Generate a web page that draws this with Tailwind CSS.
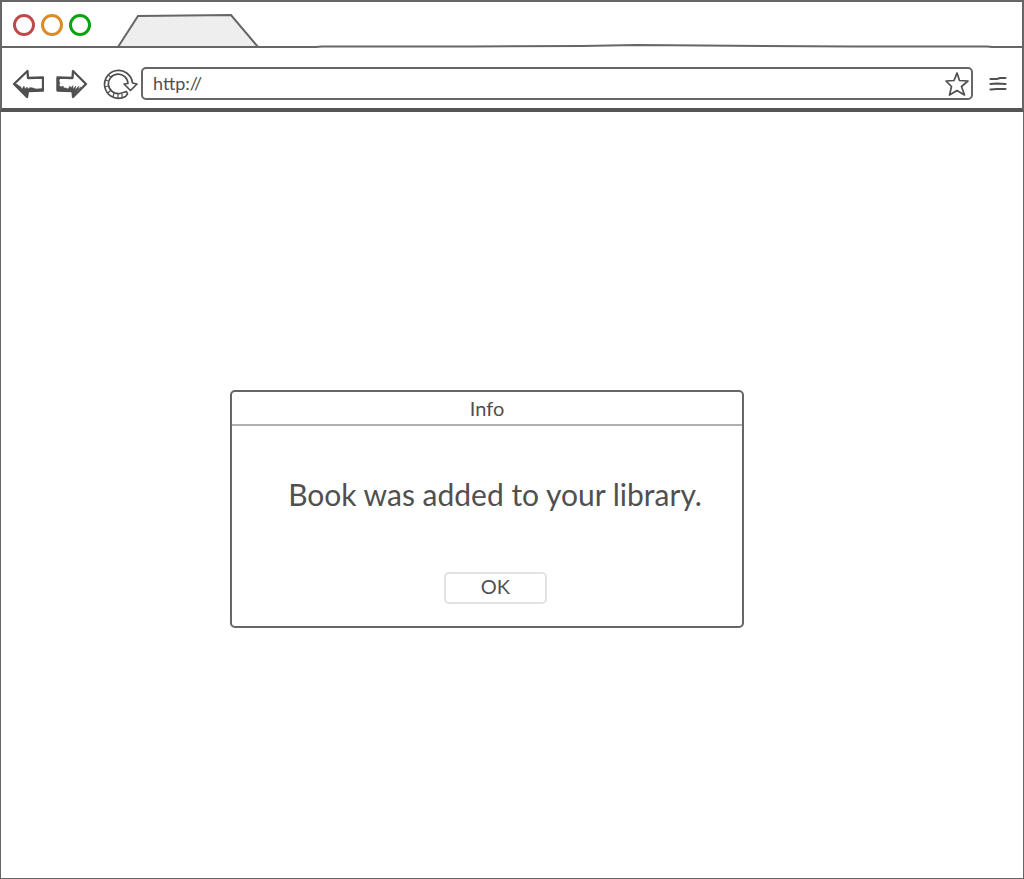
<!DOCTYPE html>
<html lang="en">
<head>
<meta charset="utf-8">
<meta name="viewport" content="width=device-width, initial-scale=1">
<title>Info</title>
<script src="https://cdn.jsdelivr.net/npm/@tailwindcss/browser@4"></script>
</head>
<body class="flex min-h-screen flex-col bg-white font-['Lato',sans-serif] text-[#505050]">
<header class="border-x-2 border-t-2 border-b-4 border-[#666] border-b-[#555]">
  <div class="flex h-[42px] items-start">
    <div class="flex gap-1 pt-[11px] pl-2.5">
      <button aria-label="Close" class="flex size-6 items-center justify-center"><span class="size-[22px] rounded-full border-[3px] border-[#bd4a4a]"></span></button>
      <button aria-label="Minimize" class="flex size-6 items-center justify-center"><span class="size-[22px] rounded-full border-[3px] border-[#dc8a22]"></span></button>
      <button aria-label="Maximize" class="flex size-6 items-center justify-center"><span class="size-[22px] rounded-full border-[3px] border-[#06a210]"></span></button>
    </div>
    <svg class="ml-6 h-[42px] w-[144px] overflow-visible" viewBox="0 0 144 42" aria-hidden="true"><path d="M2 45 22 14 115 13 142 45" fill="#eee" stroke="#666" stroke-width="2"/></svg>
  </div>
  <svg class="block h-[5px] w-full overflow-visible" viewBox="0 0 1020 5" preserveAspectRatio="none" aria-hidden="true"><path d="M0 3H314L320 2.500 470 2.500 580 2 635 1 700 1.500 850 2.500 985 2.500 990 3H1020" fill="none" stroke="#666" stroke-width="2" vector-effect="non-scaling-stroke"/></svg>
  <nav class="flex items-center pt-[18px] pr-[15px] pb-2 pl-2.5">
    <button aria-label="Back" class="h-8 w-8">
      <svg viewBox="0 1 32 32" fill="none" stroke="#505050" stroke-width="2.300" stroke-linejoin="round"><path d="M2 17 15.500 4 16 11 31 10.500 31 23.500 16 24 15 30Z"/><path d="M3 18 5 17 7 19 8 19 10 22 12 19 13 22 15 20 16 22 18 20.500 21 21 24 22 31 21.500V23.500L16 24 15 29Z" fill="#505050" stroke-width="0.500"/></svg>
    </button>
    <button aria-label="Forward" class="ml-3 h-8 w-8">
      <svg viewBox="0 1 32 32" fill="none" stroke="#505050" stroke-width="2.300" stroke-linejoin="round"><path d="M30 17 17 4 16.500 11 1.500 10.500 1.500 23.500 16.500 24 17 30Z"/><path d="M1 11H4L3 14 4 16 3 18 5 20 7 19 8 21 10 21 12 22 14 19 15 21 17 18.500 17 22 20 19 19 23 23 19 22 22 25 20 17 29 16 24 1 23.500Z" fill="#505050" stroke-width="0.500"/></svg>
    </button>
    <button aria-label="Reload" class="ml-[15px] h-8 w-9">
      <svg viewBox="0 0 36 32" fill="none" stroke="#505050" stroke-width="1.700" stroke-linejoin="round"><path d="M22.500 28.500A14 14 0 1 1 29.500 15L34 16 27.500 22.500 21 16 25 15.500A9.800 9.800 0 1 0 17 25.500L23.500 23.500 24.500 26Z"/><path d="M2 12 5.500 13M1.500 19 5.500 18M5 25 8 22M10 29 11 25M15 30V26M19 29.500V26M5 7 8 9" stroke-width="1.200"/></svg>
    </button>
    <div class="ml-0.5 flex h-[33px] min-w-0 flex-1 items-center rounded-[5px] border-2 border-[#666] pr-0.5 pl-2.5">
      <input aria-label="Address" type="text" value="http://" class="min-w-0 flex-1 bg-transparent pb-0.5 text-lg leading-6 outline-none">
      <button aria-label="Bookmark" class="size-6">
        <svg viewBox="0 1 24 24" fill="none" stroke="#505050" stroke-width="1.700" stroke-linejoin="round"><path d="M12 2 14.500 9.500 23 10 16.500 15.500 19.500 24 12 19.500 4.500 24 6.500 15.500 1 10 9 9.500Z"/></svg>
      </button>
    </div>
    <button aria-label="Menu" class="ml-4 h-4 w-[18px]">
      <svg viewBox="0 1 18 16" fill="none" stroke="#505050" stroke-width="2.200" stroke-linecap="round"><path d="M1.500 4 8 4 11 3 16.500 3M1.500 9 8 8.500 16.500 9M1.500 14.500 8 14 16.500 14"/></svg>
    </button>
  </nav>
</header>
<main class="flex flex-1 flex-col items-center border-x border-b border-[#666] pt-[278px] pr-[50px]">
  <section role="dialog" aria-labelledby="title" class="w-full max-w-[514px] rounded-[5px] border-2 border-[#666] pb-[22px]">
    <h1 id="title" class="h-[34px] border-b-2 border-[#b0b0b0] text-center text-xl leading-8">Info</h1>
    <p class="pt-12 pl-4 text-center text-[30px] leading-10">Book was added to your library.</p>
    <div class="flex justify-center pt-[58px] pl-[17px]">
      <button class="h-8 w-[103px] rounded-[5px] border-2 border-[#e2e2e2] pb-1 text-xl leading-6">OK</button>
    </div>
  </section>
</main>
</body>
</html>
